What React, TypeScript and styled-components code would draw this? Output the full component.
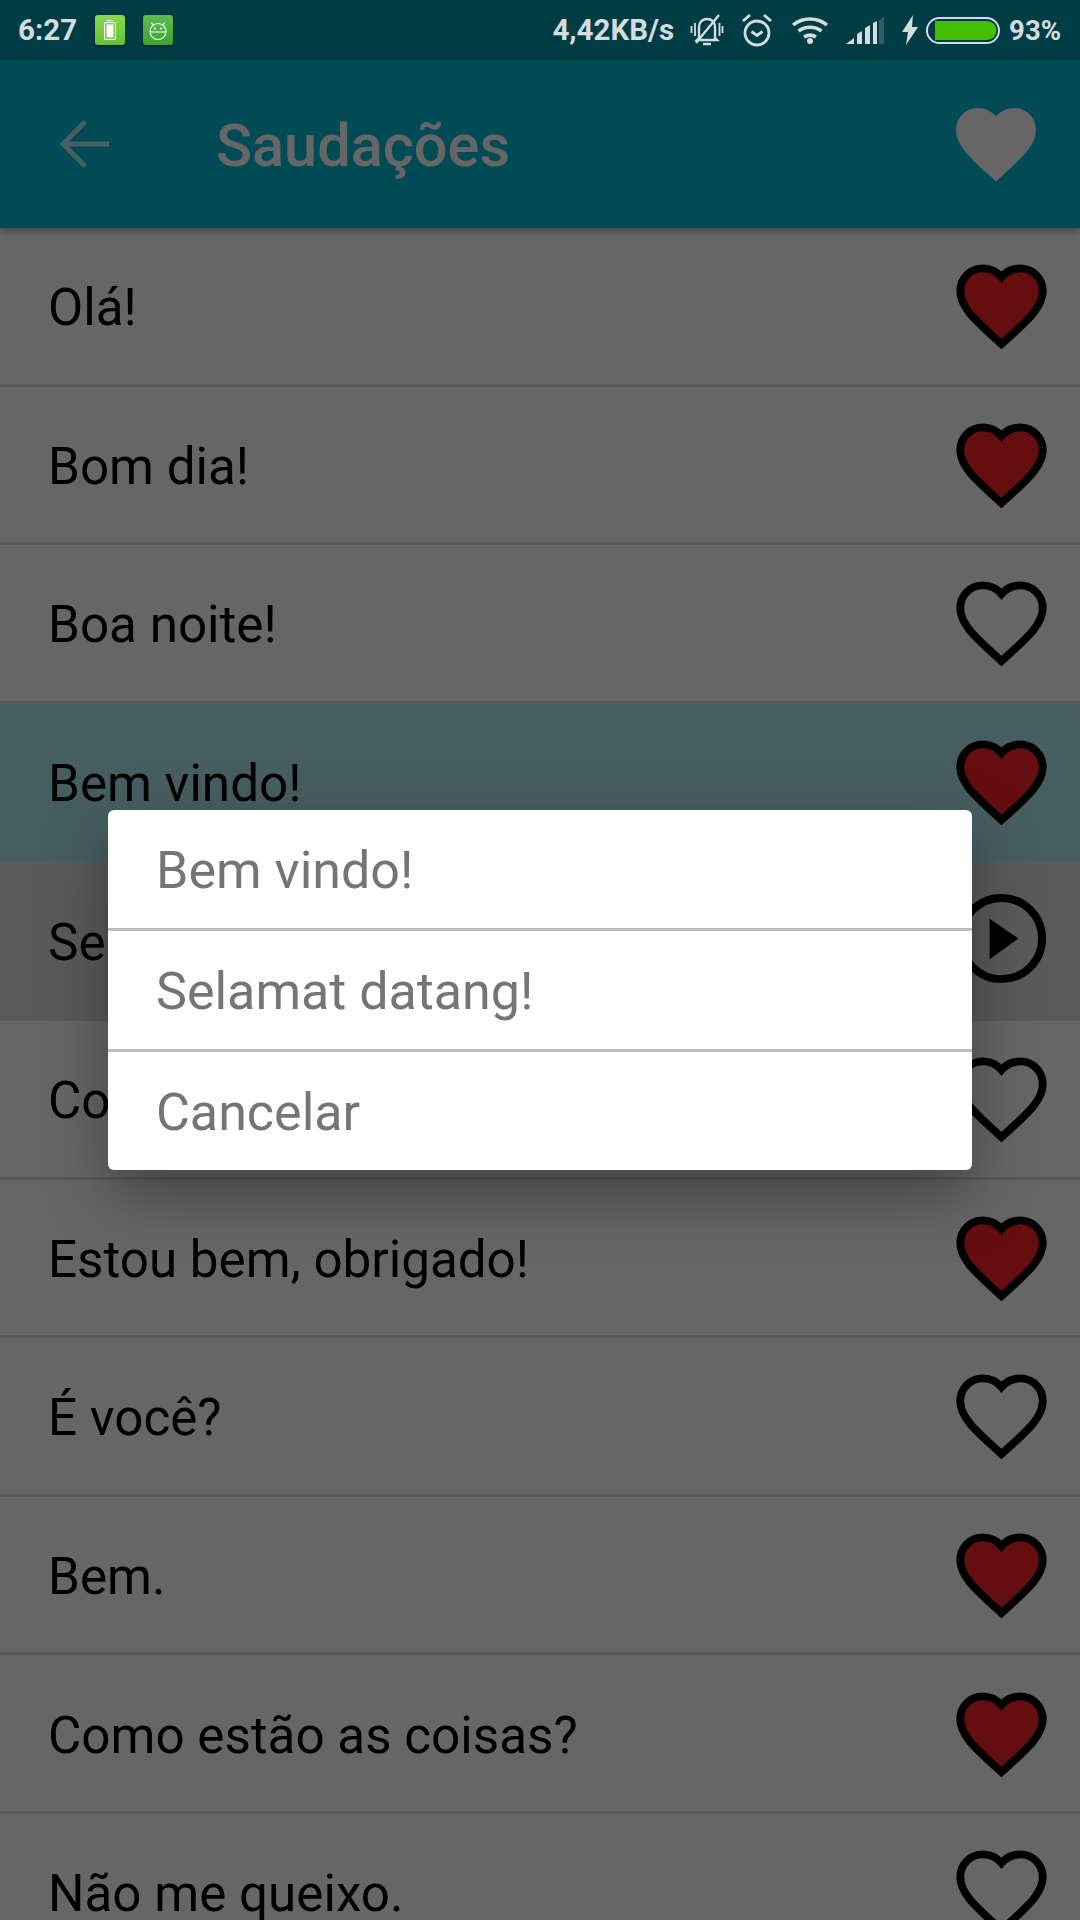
import React from "react";
import styled, { createGlobalStyle } from "styled-components";

const Global = createGlobalStyle`
  html, body { margin: 0; padding: 0; background: #fff; }
  * { box-sizing: border-box; }
`;

const Screen = styled.div`
  width: 1080px;
  height: 1920px;
  display: flex;
  flex-direction: column;
  overflow: hidden;
  font-family: Roboto, "Liberation Sans", sans-serif;
`;

const StatusBar = styled.div`
  height: 60px;
  flex: none;
  display: flex;
  align-items: center;
  justify-content: space-between;
  padding: 0 19px 0 18px;
  background: #003c44;
  color: #d3dcdf;
  font-size: 29.5px;
  font-weight: 700;
`;

const StatusGroup = styled.div`
  display: flex;
  align-items: center;
`;

const Time = styled.span`
  width: 77px;
`;

const NotifIcon = styled.svg<{ $gap?: number }>`
  width: 30px;
  height: 30px;
  margin-right: ${(p) => p.$gap ?? 0}px;
  display: block;
  filter: drop-shadow(0 1px 1px rgba(0, 0, 0, 0.5));
`;

const StatIcon = styled.svg<{ $w: number; $h: number; $ml: number }>`
  width: ${(p) => p.$w}px;
  height: ${(p) => p.$h}px;
  margin-left: ${(p) => p.$ml}px;
  display: block;
`;

const Percent = styled.span`
  margin-left: 9px;
  font-size: 27.5px;
`;

const Main = styled.div`
  position: relative;
  flex: 1;
  overflow: hidden;
  display: flex;
  flex-direction: column;
`;

const Toolbar = styled.div`
  height: 168px;
  flex: none;
  display: flex;
  align-items: center;
  padding: 0 36px 0 59px;
  background: #00bcd4;
  box-shadow: 0 3px 8px rgba(0, 0, 0, 0.35);
  position: relative;
  z-index: 1;
`;

const BackIcon = styled.svg`
  width: 50px;
  height: 48px;
  display: block;
  flex: none;
`;

const Title = styled.div`
  margin-left: 107px;
  padding-top: 4px;
  flex: 1;
  color: #fff;
  font-size: 59.5px;
  font-weight: 500;
`;

const ToolbarHeart = styled.svg`
  width: 96px;
  height: 96px;
  display: block;
  flex: none;
`;

const List = styled.div`
  flex: 1;
  display: flex;
  flex-direction: column;
  background: #fff;
`;

const Row = styled.div<{ $bg?: string }>`
  height: 158.6px;
  flex: none;
  display: flex;
  align-items: center;
  justify-content: space-between;
  padding: 0 29px 0 48px;
  background: ${(p) => p.$bg ?? "#fff"};
  border-bottom: 3px solid ${(p) => p.$bg ?? "#dedede"};
`;

const RowText = styled.span`
  color: #000;
  font-size: 51.2px;
  white-space: nowrap;
  padding-top: 4px;
`;

const RowIcon = styled.svg`
  width: 99px;
  height: 99px;
  display: block;
  flex: none;
`;

const Scrim = styled.div`
  position: absolute;
  inset: 0;
  z-index: 2;
  background: rgba(0, 0, 0, 0.6);
  display: flex;
  align-items: center;
  justify-content: center;
`;

const Dialog = styled.div`
  width: 864px;
  background: #fff;
  border-radius: 6px;
  box-shadow: 0 24px 64px rgba(0, 0, 0, 0.35);
  display: flex;
  flex-direction: column;
`;

const DialogItem = styled.div`
  height: 118px;
  display: flex;
  align-items: center;
  padding: 2px 0 0 48px;
  color: #757575;
  font-size: 52px;
`;

const DialogDivider = styled.div`
  height: 3px;
  background: #bdbdbd;
`;

const HEART =
  "M12 21.35l-1.45-1.32C5.4 15.36 2 12.28 2 8.5 2 5.42 4.42 3 7.5 3c1.74 0 3.41.81 4.5 2.09C13.09 3.81 14.76 3 16.5 3 19.58 3 22 5.42 22 8.5c0 3.78-3.4 6.86-8.55 11.54L12 21.35z";

type Kind = "fav" | "empty" | "play";

const rows: { text: string; kind: Kind; bg?: string }[] = [
  { text: "Olá!", kind: "fav" },
  { text: "Bom dia!", kind: "fav" },
  { text: "Boa noite!", kind: "empty" },
  { text: "Bem vindo!", kind: "fav", bg: "#b2ebf2" },
  { text: "Selamat datang!", kind: "play", bg: "#e0e0e0" },
  { text: "Como vai?", kind: "empty" },
  { text: "Estou bem, obrigado!", kind: "fav" },
  { text: "É você?", kind: "empty" },
  { text: "Bem.", kind: "fav" },
  { text: "Como estão as coisas?", kind: "fav" },
  { text: "Não me queixo.", kind: "empty" },
];

const Mark = ({ kind }: { kind: Kind }) =>
  kind === "play" ? (
    <RowIcon viewBox="0 0 100 100">
      <circle cx="50" cy="48" r="41" fill="none" stroke="#000" strokeWidth="8" />
      <path d="M38 28 L67 48 L38 69 Z" fill="#000" />
    </RowIcon>
  ) : (
    <RowIcon viewBox="0 0 24 24">
      <path
        d={HEART}
        fill={kind === "fav" ? "#fa2528" : "none"}
        stroke="#000"
        strokeWidth="1.9"
        strokeMiterlimit="6"
      />
    </RowIcon>
  );

export default function App() {
  return (
    <Screen>
      <Global />
      <StatusBar>
        <StatusGroup>
          <Time>6:27</Time>
          <NotifIcon $gap={18} viewBox="0 0 30 30">
            <defs>
              <linearGradient id="n1" x1="0" y1="0" x2="0" y2="1">
                <stop offset="0" stopColor="#8ad94a" />
                <stop offset="1" stopColor="#63c236" />
              </linearGradient>
            </defs>
            <rect width="30" height="30" rx="3" fill="url(#n1)" />
            <rect x="9.500" y="7.500" width="11" height="17" fill="none" stroke="#fff" />
            <rect x="11.500" y="9.500" width="7" height="13" fill="#fff" />
            <path d="M12 5.500h6" stroke="#fff" strokeWidth="1" />
          </NotifIcon>
          <NotifIcon viewBox="0 0 30 30">
            <defs>
              <linearGradient id="n2" x1="0" y1="0" x2="0" y2="1">
                <stop offset="0" stopColor="#5cbc4c" />
                <stop offset="1" stopColor="#3aa336" />
              </linearGradient>
            </defs>
            <rect width="30" height="30" rx="3" fill="url(#n2)" />
            <circle cx="15" cy="16.500" r="8" fill="none" stroke="#fff" strokeWidth="1.100" />
            <path d="M7 17h16M8.500 7.500l2 3.500M21.500 7.500l-2 3.500" stroke="#fff" strokeWidth="1.100" />
            <circle cx="12" cy="13.500" r="1.100" fill="#fff" />
            <circle cx="18" cy="13.500" r="1.100" fill="#fff" />
          </NotifIcon>
        </StatusGroup>
        <StatusGroup>
          <span>4,42KB/s</span>
          <StatIcon $w={34} $h={34} $ml={16} viewBox="0 0 34 34" fill="none" stroke="#d3dcdf" strokeWidth="2.400">
            <path d="M9 25V14c0-5 3.500-8 8-8s8 3 8 8v11l2 2H7L9 25z" />
            <path d="M13 31h8M29 2L6 30" />
            <path d="M1.500 13v7M5 10v13M32.500 13v7M29.500 10v13" strokeWidth="1.800" />
          </StatIcon>
          <StatIcon $w={32} $h={34} $ml={17} viewBox="0 0 32 34" fill="none" stroke="#d3dcdf" strokeWidth="2.800">
            <circle cx="16" cy="20" r="12" />
            <path d="M10.500 18.500l5.500 4 5.500-4M2 8l7-6M30 8l-7-6" />
          </StatIcon>
          <StatIcon $w={38} $h={28} $ml={18} viewBox="0 0 38 28" fill="none" stroke="#d3dcdf" strokeWidth="3.500">
            <path d="M2 9c10-8 24-8 34 0M7.500 15c7-5 16-5 23 0M13 21c4-2.500 8-2.500 12 0" />
            <circle cx="19" cy="25" r="3" fill="#d3dcdf" stroke="none" />
          </StatIcon>
          <StatIcon $w={38} $h={27} $ml={17} viewBox="0 0 38 27">
            <path d="M0 27l8-6v6zM11 27V17l5-3v13zM19 27V11l5-3v19zM27 27V6l4-2v23z" fill="#d3dcdf" />
            <path d="M33 27V3l5-3v27z" fill="#2f5c62" />
          </StatIcon>
          <StatIcon $w={16} $h={30} $ml={18} viewBox="0 0 16 30">
            <path d="M11 0L0 17h6L4 30 16 12h-6z" fill="#d3dcdf" />
          </StatIcon>
          <StatIcon $w={74} $h={27} $ml={8} viewBox="0 0 74 27">
            <rect x="1" y="1" width="72" height="25" rx="12.500" fill="none" stroke="#d3dcdf" strokeWidth="2" />
            <path d="M9 4h52a9.500 9.500 0 0 1 0 19H9z" fill="#45c000" />
          </StatIcon>
          <Percent>93%</Percent>
        </StatusGroup>
      </StatusBar>
      <Main>
        <Toolbar>
          <BackIcon viewBox="0 0 50 48" fill="none" stroke="rgba(255,255,255,0.7)" strokeWidth="5">
            <path d="M50 24H4M26 2L4 24l22 22" />
          </BackIcon>
          <Title>Saudações</Title>
          <ToolbarHeart viewBox="0 0 24 24">
            <path d={HEART} fill="#fff" />
          </ToolbarHeart>
        </Toolbar>
        <List>
          {rows.map((r) => (
            <Row key={r.text} $bg={r.bg}>
              <RowText>{r.text}</RowText>
              <Mark kind={r.kind} />
            </Row>
          ))}
        </List>
        <Scrim>
          <Dialog>
            <DialogItem>Bem vindo!</DialogItem>
            <DialogDivider />
            <DialogItem>Selamat datang!</DialogItem>
            <DialogDivider />
            <DialogItem>Cancelar</DialogItem>
          </Dialog>
        </Scrim>
      </Main>
    </Screen>
  );
}
